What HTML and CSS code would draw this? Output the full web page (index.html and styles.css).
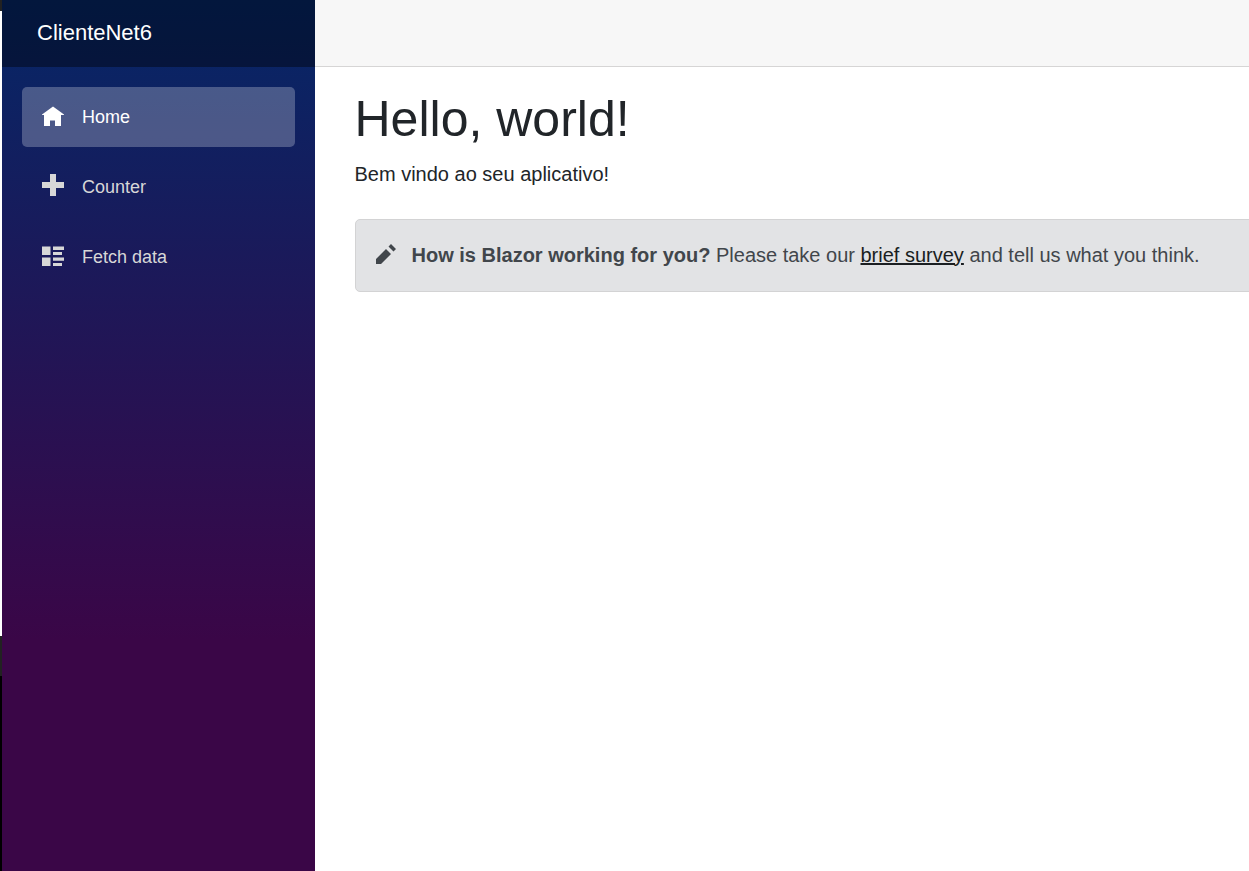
FILE: index.html
```
<!DOCTYPE html>
<html lang="pt">
<head>
<meta charset="utf-8">
<title>ClienteNet6</title>
<link rel="stylesheet" href="styles.css">
</head>
<body>
<div class="page">
  <div class="edge"></div>
  <aside class="sidebar">
    <div class="top-row brand-row"><a class="brand">ClienteNet6</a></div>
    <nav class="nav">
      <a class="nav-link active"><svg class="icon" viewBox="0 0 22 22"><path d="M11 .5L0 8.500v.5h2V20h6v-5.500h5V20h6V9h3v-.5z"/></svg><span>Home</span></a>
      <a class="nav-link"><svg class="icon" viewBox="0 0 22 22" shape-rendering="crispEdges"><path d="M8 -2h6v8h8v6h-8v8h-6v-8h-8v-6h8z"/></svg><span>Counter</span></a>
      <a class="nav-link"><svg class="icon" viewBox="0 0 22 22"><path d="M0 .5h8.500v8.500h-8.500zM11 .5h11v3.500h-11zM11 6h9v3h-9zM0 11.500h8.500v8.500h-8.500zM11 11.500h11v3.300h-11zM11 17h9v3h-9z"/></svg><span>Fetch data</span></a>
    </nav>
  </aside>
  <main class="main">
    <div class="top-row header"></div>
    <article class="content">
      <h1 class="title">Hello, world!</h1>
      <p class="intro">Bem vindo ao seu aplicativo!</p>
      <div class="alert">
        <svg class="pencil" viewBox="0 0 8 8"><path d="M6 0l-1 1 2 2 1-1-2-2zm-2 2l-4 4v2h2l4-4-2-2z"/></svg>
        <p class="alert-text"><strong>How is Blazor working for you?</strong> <span>Please take our <a class="link">brief survey</a> and tell us what you think.</span></p>
      </div>
    </article>
  </main>
</div>
</body>
</html>
```
FILE: styles.css
```
* { box-sizing: border-box; }
body { margin: 0; font-family: "Liberation Sans", Arial, sans-serif; font-size: 20px; line-height: 30px; color: #212529; background: #fff; }
.page { display: flex; height: 871px; overflow: hidden; }
.edge { width: 2px; flex: none; background: linear-gradient(#222 0 11px, #fff 11px 636px, #222 636px 676px, #000 676px); }
.sidebar { width: 313px; flex: none; background: linear-gradient(180deg, #052767 0, #3a0647 640px); }
.top-row { height: 67px; display: flex; align-items: center; }
.brand-row { background: rgba(0, 0, 0, .4); padding: 0 0 1px 35px; }
.brand { color: #fff; font-size: 22px; }
.nav { display: flex; flex-direction: column; gap: 10px; padding: 20px; }
.nav-link { display: flex; align-items: center; height: 60px; padding-left: 20px; border-radius: 5px; color: #d7d7d7; font-size: 18px; }
.nav-link.active { background: rgba(255, 255, 255, .25); color: #fff; }
.icon { width: 22px; height: 22px; margin-right: 18px; overflow: visible; fill: currentColor; }
.main { flex: 1; min-width: 0; }
.header { background: #f7f7f7; border-bottom: 1px solid #d6d5d5; }
.content { padding: 22px 0 0 39.5px; }
.title { margin: 0 0 10px; font-size: 50px; font-weight: 500; line-height: 60px; }
.intro { margin: 0; }
.alert { display: flex; align-items: center; width: 934px; height: 73px; margin: 30px 0 0 .5px; padding: 0 0 2px 19.5px; border: 1px solid #d3d3d4; border-radius: 5px; background: #e2e3e5; color: #41464b; }
.pencil { width: 20px; height: 20px; margin: 0 16px 2px 0; fill: currentColor; }
.alert-text { margin: 0; white-space: nowrap; }
.link { color: #1a1e21; text-decoration: underline; }
```
